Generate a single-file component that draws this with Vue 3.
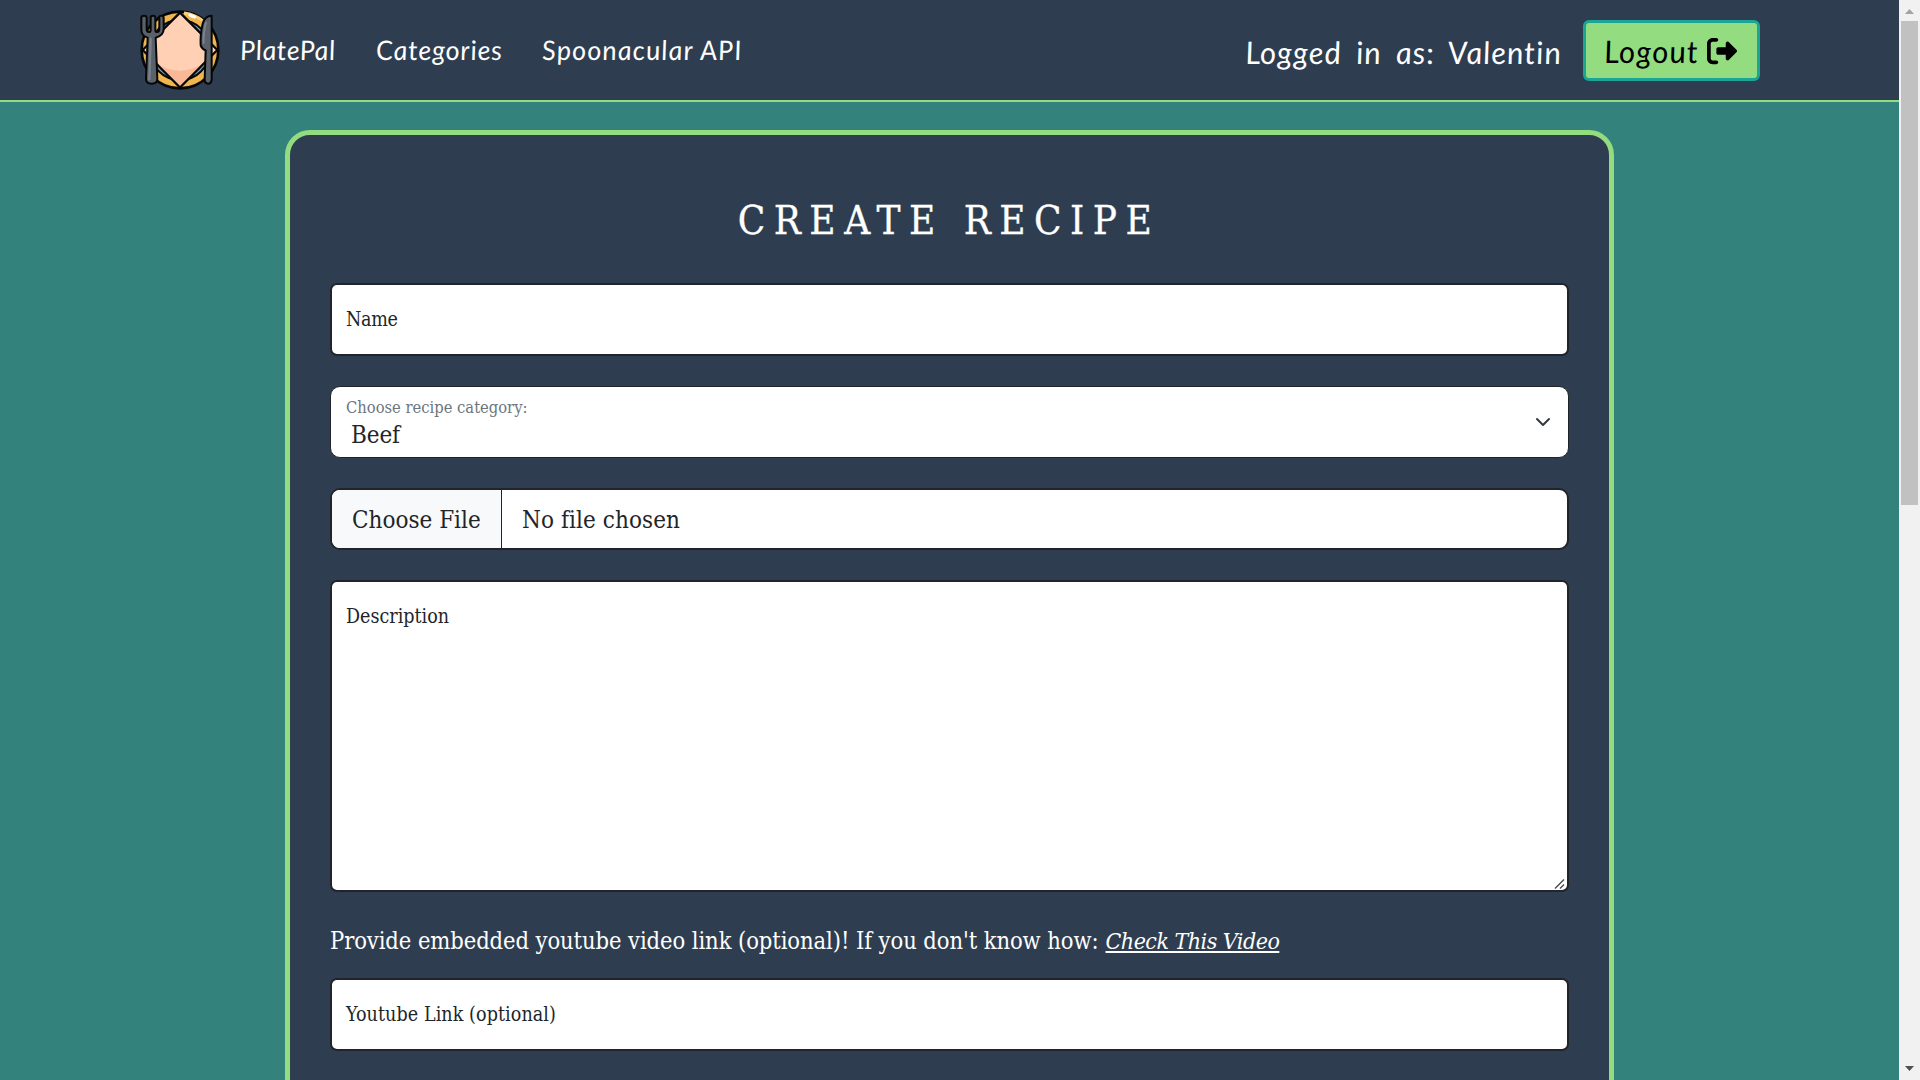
<script setup>
const links = [
  { text: 'PlatePal', cls: 'brand' },
  { text: 'Categories', cls: 'cats' },
  { text: 'Spoonacular API', cls: 'api' }
]
</script>

<template>
  <div class="window">
    <div class="page">
      <header class="navbar">
        <svg class="logo" viewBox="60 30 240 240" aria-hidden="true">
          <circle cx="180" cy="150" r="115" fill="#efb54f" stroke="#070707" stroke-width="8" />
          <path d="M192 39a112 112 0 0 1 60 26" fill="none" stroke="#f8cf7a" stroke-width="9" />
          <path d="M210 46l14 5" stroke="#fff" stroke-width="9" stroke-linecap="round" />
          <circle cx="180" cy="150" r="90" fill="#7f9fb6" stroke="#070707" stroke-width="6" />
          <path d="M180 38 292 150 180 262 68 150z" fill="#ffd0b3" stroke="#070707" stroke-width="7" stroke-linejoin="round" />
          <path d="M119 196q61 32 122 0L180 257z" fill="#f9b896" />
          <path
            d="M64 53v36q0 18 19 24l-5 124q0 14 17 14t17-14l-5-124q24-7 24-26V53q0-6-7-6t-6 6v35q0 8-7 8-5 0-5-7V53q0-6-7-6t-7 6v36q0 7-5 7-7 0-7-9V53q0-6-8-6t-8 6z"
            fill="#59616b" stroke="#070707" stroke-width="6" stroke-linejoin="round"
          />
          <path d="M92 116l-4 122" stroke="#7a828c" stroke-width="7" stroke-linecap="round" />
          <path
            d="M275 47q-20 0-27 24-8 34-6 65 4 11 15 15l-3 87q0 13 10 13t11-13z"
            fill="#59616b" stroke="#070707" stroke-width="6" stroke-linejoin="round"
          />
          <path d="M258 68q-8 28-7 61" fill="none" stroke="#7a828c" stroke-width="6" stroke-linecap="round" />
        </svg>
        <nav class="links">
          <a v-for="l in links" :key="l.text" :class="l.cls"><span>{{ l.text }}</span></a>
        </nav>
        <span class="user">Logged in as: Valentin</span>
        <button class="logout" type="button">
          <span>Logout</span>
          <svg viewBox="0 0 512 512" aria-hidden="true">
            <path d="M502.6 278.6c12.5-12.5 12.5-32.8 0-45.3l-128-128c-9.2-9.2-22.9-11.9-34.9-6.9s-19.8 16.6-19.8 29.6l0 64-128 0c-17.7 0-32 14.3-32 32l0 64c0 17.7 14.3 32 32 32l128 0 0 64c0 12.9 7.8 24.6 19.8 29.6s25.7 2.2 34.9-6.9l128-128zM160 96c17.7 0 32-14.3 32-32s-14.3-32-32-32L96 32C43 32 0 75 0 128L0 384c0 53 43 96 96 96l64 0c17.7 0 32-14.3 32-32s-14.3-32-32-32l-64 0c-17.7 0-32-14.3-32-32l0-256c0-17.7 14.3-32 32-32l64 0z" />
          </svg>
        </button>
      </header>

      <main class="card">
        <h1>CREATE RECIPE</h1>
        <div class="field name"><span>Name</span></div>
        <div class="select">
          <div class="choice">
            <span class="caption">Choose recipe category:</span>
            <span class="value">Beef</span>
          </div>
          <svg width="16" height="16" viewBox="0 0 16 16" aria-hidden="true">
            <path d="m2 5 6 6 6-6" fill="none" stroke="#343a40" stroke-width="2" stroke-linecap="round" stroke-linejoin="round" />
          </svg>
        </div>
        <div class="file">
          <span class="pick">Choose File</span>
          <span class="chosen">No file chosen</span>
        </div>
        <div class="field area">
          <span class="desc">Description</span>
          <svg class="grip" width="12" height="12" viewBox="0 0 12 12" aria-hidden="true">
            <path d="M1 10.5 10 1.5M6 10.5l4-4" stroke="#4b4b4b" stroke-width="1.4" fill="none" />
          </svg>
        </div>
        <p class="hint"><span>Provide embedded youtube video link (optional)! If you don't know how:</span><a>Check This Video</a></p>
        <div class="field link"><span>Youtube Link (optional)</span></div>
      </main>
    </div>

    <div class="scrollbar">
      <svg width="21" height="21" viewBox="0 0 21 21"><path d="M6 14h9L10.5 9z" fill="#a3a3a3" /></svg>
      <div class="thumb"></div>
      <svg class="down" width="21" height="21" viewBox="0 0 21 21"><path d="M6 7h9l-4.500 5z" fill="#505050" /></svg>
    </div>
  </div>
</template>

<style>
body {
  overflow: hidden;
}
</style>

<style scoped>
* {
  box-sizing: border-box;
}
.window {
  display: flex;
  width: 1920px;
  height: 1080px;
  overflow: hidden;
  font-family: "DejaVu Serif Condensed", "DejaVu Serif", serif;
  color: #212529;
}
.page {
  width: 1899px;
  height: 1080px;
  overflow: hidden;
  background: #33837c;
}
.navbar {
  display: flex;
  align-items: center;
  height: 102px;
  padding: 0 139px 0 140px;
  background: #2e3e50;
  border-bottom: 2px solid #93dc80;
  font-family: Lato, sans-serif;
  font-style: italic;
  font-variant-ligatures: none;
  color: #fff;
  white-space: nowrap;
}
.logo {
  width: 80px;
  height: 80px;
  flex: none;
}
.links {
  display: flex;
  margin-left: 20px;
  font-size: 27px;
  line-height: 32px;
  padding-bottom: 1px;
}
/* Eases the italic's slant to a gentler, handwritten lean */
.links span,
.user,
.logout span {
  display: inline-block;
  transform: skewX(5deg);
}
.brand {
  width: 136px;
  letter-spacing: 0.6px;
}
.cats {
  width: 166px;
  letter-spacing: 0.8px;
}
.api {
  letter-spacing: 1.1px;
}
.user {
  margin-left: auto;
  width: 338px;
  padding-top: 3px;
  font-size: 31px;
  line-height: 38px;
  letter-spacing: 1px;
  word-spacing: 6px;
}
.logout {
  display: flex;
  align-items: center;
  width: 177px;
  height: 61px;
  margin-top: 1px;
  padding: 0 0 0 18px;
  background: #93dc80;
  border: 3px solid #1aa596;
  border-radius: 6px;
  font: inherit;
  font-size: 31px;
  text-align: left;
  letter-spacing: 1.2px;
  color: #000;
}
.logout span {
  flex: none;
  width: 103px;
  padding-top: 1px;
}
.logout svg {
  flex: none;
  width: 30px;
  height: 30px;
}
.card {
  display: flex;
  flex-direction: column;
  width: 1329px;
  height: 1100px;
  margin: 28px 0 0 285px;
  padding: 60px 40px 0;
  background: #2e3e50;
  border: 5px solid #93dc80;
  border-radius: 25px;
}
h1 {
  margin: 0 0 38px;
  padding-right: 1px;
  font-size: 40px;
  font-weight: 400;
  line-height: 50px;
  letter-spacing: 8.500px;
  text-align: center;
  color: #fff;
  -webkit-text-stroke: 0.3px #fff;
  white-space: nowrap;
}
.field {
  display: flex;
  flex: none;
  align-items: center;
  height: 73px;
  padding-left: 14px;
  background: #fff;
  border: 2px solid #212529;
  border-radius: 7px;
  font-size: 19.500px;
}
.name {
  letter-spacing: -0.3px;
}
.select {
  display: flex;
  flex: none;
  align-items: center;
  justify-content: space-between;
  height: 72px;
  margin: 30px 0;
  padding: 0 17px 0 15px;
  background: #fff;
  border: 1px solid #212529;
  border-radius: 10px;
}
.choice {
  display: flex;
  flex-direction: column;
  padding-top: 2px;
}
.caption {
  font-size: 16.400px;
  line-height: 24px;
  color: #6c757d;
}
.value {
  padding-left: 5px;
  font-size: 24px;
  line-height: 30px;
  letter-spacing: -0.100px;
}
.file {
  display: flex;
  flex: none;
  height: 62px;
  margin-bottom: 30px;
  background: #fff;
  border: 2px solid #212529;
  border-radius: 10px;
  overflow: hidden;
  font-size: 24px;
  line-height: 60px;
}
.pick {
  width: 170px;
  padding-left: 20px;
  background: #f8f9fa;
  border-right: 1px solid #212529;
}
.chosen {
  padding-left: 20px;
  letter-spacing: 0.080px;
}
.area {
  position: relative;
  align-items: flex-start;
  height: 312px;
}
.desc {
  margin-top: 23px;
  line-height: 24px;
}
.grip {
  position: absolute;
  right: 1px;
  bottom: 0;
}
.hint {
  display: flex;
  gap: 7px;
  height: 30px;
  margin: 34px 0 22px;
  font-size: 23.500px;
  line-height: 30px;
  letter-spacing: -0.080px;
  color: #fff;
  white-space: nowrap;
}
.hint a {
  font-size: 23px;
  font-style: italic;
  letter-spacing: -0.520px;
  text-decoration: underline;
  text-decoration-thickness: 2px;
  text-underline-offset: 2px;
  text-decoration-skip-ink: none;
}
.link {
  letter-spacing: 0.080px;
}
.scrollbar {
  display: flex;
  flex-direction: column;
  align-items: center;
  width: 21px;
  height: 1080px;
  background: #f1f1f1;
}
.thumb {
  width: 17px;
  height: 484px;
  background: #c1c1c1;
}
.down {
  margin-top: auto;
}
</style>
